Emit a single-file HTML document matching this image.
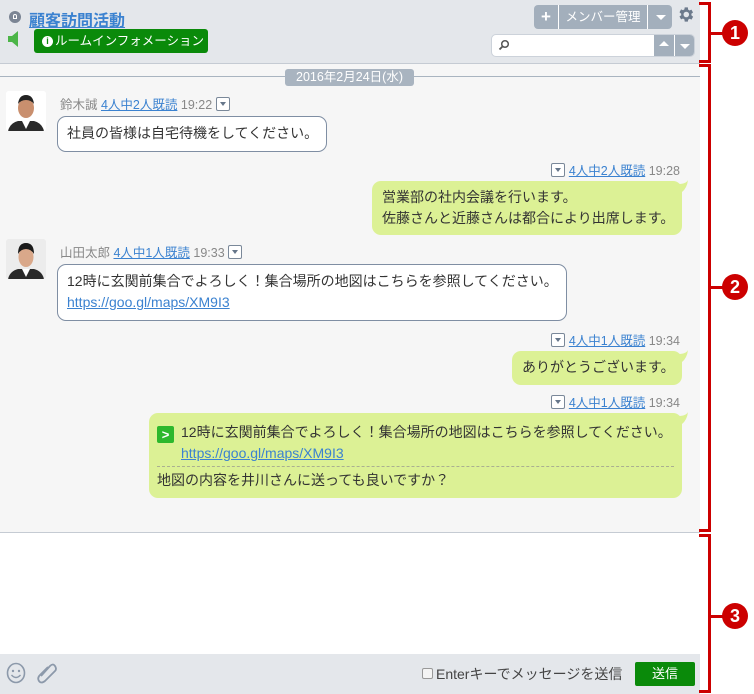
<!DOCTYPE html>
<html><head><meta charset="utf-8"><style>
*{box-sizing:border-box;margin:0;padding:0}
body{width:754px;height:694px;position:relative;background:#fff;font-family:"Liberation Sans","Noto Sans CJK JP",sans-serif;font-size:14px;color:#333;overflow:hidden}
.a{position:absolute}
.hdr{left:0;top:0;width:700px;height:64px;background:#e4e7eb;border-bottom:1px solid #c5cbd3}
.chat{left:0;top:64px;width:700px;height:469px;background:#f6f6f6;border-bottom:1px solid #c5cbd3}
.foot{left:0;top:654px;width:700px;height:40px;background:#e4e7eb}
.lnk{color:#3b82d0;text-decoration:underline}
.meta{font-size:12.5px;color:#888;white-space:nowrap}
.mr{right:74px;text-align:right}
.dd{display:inline-block;width:14px;height:14px;border:1px solid #7a8899;border-radius:2px;background:#fff;vertical-align:-2px;position:relative}
.dd:after{content:"";position:absolute;left:3px;top:4px;border:3px solid transparent;border-top:4px solid #66768a}
.bw{background:#fff;border:1px solid #7f8ea3;border-radius:9px;padding:6px 9px;line-height:21px;white-space:nowrap}
.bg{background:#dcf195;border-radius:9px;padding:6px 10px;line-height:21px;white-space:nowrap}
.av{width:40px;height:40px;border-radius:3px;background:#fff;overflow:hidden}
.red{background:#c00}
.num{width:26px;height:26px;border-radius:13px;background:#c00;color:#fff;font-weight:bold;font-size:18px;text-align:center;line-height:26px}
</style></head><body>
<div class="a hdr"></div>
<div class="a chat"></div>
<div class="a foot"></div>
<!-- header -->
<div class="a" style="left:9px;top:11px;width:12px;height:12px;border-radius:6px;background:#7b8594"></div>
<div class="a" style="left:13px;top:14px;width:4px;height:5px;border:1px solid #fff;border-radius:2px 2px 0 0"></div>
<div class="a lnk" style="left:29px;top:7px;font-size:16px;font-weight:bold;color:#3b82d0">顧客訪問活動</div>
<svg class="a" style="left:8px;top:31px" width="12" height="16"><path d="M0 5h4l6-5v16l-6-5H0z" fill="#4cb548"/></svg>
<div class="a" style="left:34px;top:29px;width:174px;height:24px;background:#0a8a0a;border-radius:3px;color:#fff;font-size:12.5px;line-height:24px;padding-left:8px;display:flex;align-items:center;white-space:nowrap">
<span style="display:inline-block;width:11px;height:11px;border-radius:6px;background:#fff;color:#0a8a0a;font-size:9px;line-height:11px;text-align:center;font-weight:bold;margin-right:2px">i</span>ルームインフォメーション</div>
<div class="a" style="left:534px;top:5px;width:138px;height:24px;background:#a3afbc;border-radius:4px"></div>
<div class="a" style="left:558px;top:5px;width:1px;height:24px;background:#fff"></div>
<div class="a" style="left:647px;top:5px;width:1px;height:24px;background:#fff"></div>
<div class="a" style="left:534px;top:5px;width:24px;text-align:center;color:#fff;font-size:17px;font-weight:bold;line-height:24px">+</div>
<div class="a" style="left:559px;top:5px;width:88px;text-align:center;color:#fff;font-size:12.5px;line-height:24px;white-space:nowrap">メンバー管理</div>
<div class="a" style="left:656px;top:15px;border:5px solid transparent;border-top:5px solid #fff"></div>
<svg class="a" style="left:676px;top:5px" width="19" height="19" viewBox="0 0 24 24"><path fill="#6c7a8c" d="M19.4 13a7.5 7.5 0 000-2l2.1-1.6-2-3.5-2.5 1a7.6 7.6 0 00-1.7-1L15 3h-4l-.4 2.6a7.6 7.6 0 00-1.7 1l-2.5-1-2 3.5L6.6 11a7.5 7.5 0 000 2l-2.2 1.6 2 3.5 2.5-1a7.6 7.6 0 001.7 1L11 21h4l.4-2.6a7.6 7.6 0 001.7-1l2.5 1 2-3.5zM13 15.5a3.5 3.5 0 110-7 3.5 3.5 0 010 7z"/></svg>
<div class="a" style="left:491px;top:34px;width:204px;height:23px;background:#fff;border:1px solid #ccd2da;border-radius:5px;overflow:hidden">
<div class="a" style="left:162px;top:0;width:20px;height:23px;background:#a3afbc"></div>
<div class="a" style="left:183px;top:0;width:20px;height:23px;background:#a3afbc"></div>
<div class="a" style="left:167px;top:6px;border:5px solid transparent;border-bottom:5px solid #fff;border-top:0"></div>
<div class="a" style="left:188px;top:9px;border:5px solid transparent;border-top:5px solid #fff;border-bottom:0"></div>
<svg class="a" style="left:6px;top:4px" width="12" height="12"><circle cx="7" cy="5" r="3.3" fill="none" stroke="#555" stroke-width="1.5"/><path d="M4.6 7.4L1.5 10.5" stroke="#555" stroke-width="1.8"/></svg>
</div>
<!-- date -->
<div class="a" style="left:0;top:76px;width:700px;height:1px;background:#a9b4c0"></div>
<div class="a" style="left:285px;top:69px;width:129px;height:17px;background:#a9b4c0;border-radius:3px;color:#fff;font-size:12.5px;text-align:center;line-height:17px;white-space:nowrap">2016年2月24日(水)</div>
<!-- msg1 -->
<div class="a av" style="left:6px;top:91px"><svg width="40" height="40"><rect width="40" height="40" fill="#fff"/><path d="M2 40q2-8 10-10h16q8 2 10 10z" fill="#2a2a2a"/><path d="M16 30l4 8 4-8z" fill="#fff"/><ellipse cx="20" cy="17" rx="8" ry="10" fill="#c98f6e"/><path d="M12 13q1-9 8-9t8 9q-3-4-8-4t-8 4z" fill="#222"/></svg></div>
<div class="a meta" style="left:60px;top:94px">鈴木誠 <span class="lnk">4人中2人既読</span> 19:22 <span class="dd"></span></div>
<div class="a bw" style="left:57px;top:116px;width:270px;height:36px">社員の皆様は自宅待機をしてください。</div>
<!-- msg2 -->
<div class="a meta mr" style="top:160px"><span class="dd"></span> <span class="lnk">4人中2人既読</span> 19:28</div>
<div class="a bg" style="left:372px;top:181px;width:310px;height:54px">営業部の社内会議を行います。<br>佐藤さんと近藤さんは都合により出席します。</div>
<svg class="a" style="left:678px;top:180px" width="12" height="12"><path d="M0 4Q8 4 10 0Q9 8 4 12z" fill="#dcf195"/></svg>
<!-- msg3 -->
<div class="a av" style="left:6px;top:239px;background:#eee"><svg width="40" height="40"><rect width="40" height="40" fill="#ececec"/><path d="M2 40q2-8 10-10h16q8 2 10 10z" fill="#2a2a2a"/><path d="M16 30l4 8 4-8z" fill="#fff"/><ellipse cx="20" cy="18" rx="7.5" ry="10" fill="#d9a88a"/><path d="M12 15q0-11 8-11t8 11q-3-5-8-5t-8 5z" fill="#1a1a1a"/></svg></div>
<div class="a meta" style="left:60px;top:242px">山田太郎 <span class="lnk">4人中1人既読</span> 19:33 <span class="dd"></span></div>
<div class="a bw" style="left:57px;top:264px;width:510px;height:57px">12時に玄関前集合でよろしく！集合場所の地図はこちらを参照してください。<br><span class="lnk">https://goo.gl/maps/XM9I3</span></div>
<!-- msg4 -->
<div class="a meta mr" style="top:330px"><span class="dd"></span> <span class="lnk">4人中1人既読</span> 19:34</div>
<div class="a bg" style="left:512px;top:351px;width:170px;height:34px">ありがとうございます。</div>
<svg class="a" style="left:678px;top:350px" width="12" height="12"><path d="M0 4Q8 4 10 0Q9 8 4 12z" fill="#dcf195"/></svg>
<!-- msg5 -->
<div class="a meta mr" style="top:392px"><span class="dd"></span> <span class="lnk">4人中1人既読</span> 19:34</div>
<div class="a bg" style="left:149px;top:413px;width:533px;height:85px"></div>
<svg class="a" style="left:678px;top:412px" width="12" height="12"><path d="M0 4Q8 4 10 0Q9 8 4 12z" fill="#dcf195"/></svg>
<div class="a" style="left:157px;top:426px;width:17px;height:17px;background:#2db82d;border-radius:2px;color:#fff;font-size:13px;font-weight:bold;text-align:center;line-height:17px">&gt;</div>
<div class="a" style="left:181px;top:422px;line-height:21px;white-space:nowrap">12時に玄関前集合でよろしく！集合場所の地図はこちらを参照してください。<br><span class="lnk">https://goo.gl/maps/XM9I3</span></div>
<div class="a" style="left:157px;top:466px;width:517px;border-top:1px dashed #aab090"></div>
<div class="a" style="left:157px;top:470px;line-height:21px;white-space:nowrap">地図の内容を井川さんに送っても良いですか？</div>
<!-- footer -->
<svg class="a" style="left:6px;top:662px" width="20" height="22"><ellipse cx="10" cy="11" rx="8.5" ry="9.5" fill="none" stroke="#8c99aa" stroke-width="1.6"/><circle cx="7" cy="9" r="1.2" fill="#8c99aa"/><circle cx="13" cy="9" r="1.2" fill="#8c99aa"/><path d="M5.5 13q4.5 5 9 0" fill="none" stroke="#8c99aa" stroke-width="1.4"/></svg>
<svg class="a" style="left:36px;top:662px" width="22" height="22"><path d="M5 14L14 4q3-3 5 0t0 5L9 19q-4 3-6 0t1-6l8-8" fill="none" stroke="#8c99aa" stroke-width="1.8"/></svg>
<div class="a" style="left:422px;top:668px;width:11px;height:11px;border:1px solid #999;border-radius:2px;background:#f4f4f4"></div>
<div class="a" style="left:436px;top:664px;color:#444;font-size:14px;white-space:nowrap">Enterキーでメッセージを送信</div>
<div class="a" style="left:635px;top:662px;width:60px;height:24px;background:#0a8a0a;border-radius:2px;color:#fff;font-size:13px;text-align:center;line-height:24px">送信</div>
<!-- brackets -->
<div class="a red" style="left:708px;top:2px;width:3px;height:61px"></div>
<div class="a red" style="left:699px;top:2px;width:12px;height:3px"></div>
<div class="a red" style="left:699px;top:60px;width:12px;height:3px"></div>
<div class="a red" style="left:710px;top:32px;width:14px;height:3px"></div>
<div class="a num" style="left:722px;top:20px">1</div>
<div class="a red" style="left:708px;top:64px;width:3px;height:468px"></div>
<div class="a red" style="left:699px;top:64px;width:12px;height:3px"></div>
<div class="a red" style="left:699px;top:529px;width:12px;height:3px"></div>
<div class="a red" style="left:710px;top:286px;width:14px;height:3px"></div>
<div class="a num" style="left:722px;top:274px">2</div>
<div class="a red" style="left:708px;top:534px;width:3px;height:159px"></div>
<div class="a red" style="left:699px;top:534px;width:12px;height:3px"></div>
<div class="a red" style="left:699px;top:690px;width:12px;height:3px"></div>
<div class="a red" style="left:710px;top:615px;width:14px;height:3px"></div>
<div class="a num" style="left:722px;top:603px">3</div>
</body></html>
